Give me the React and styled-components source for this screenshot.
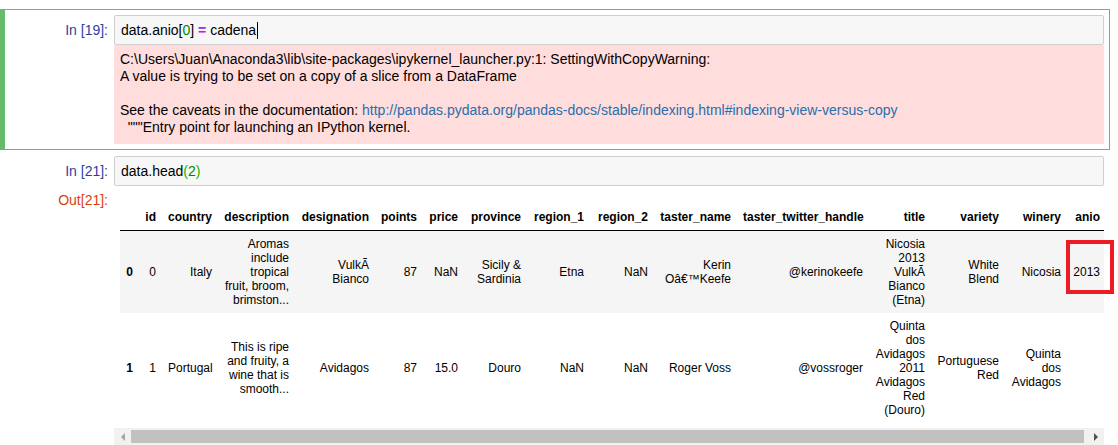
import styled, { createGlobalStyle } from 'styled-components';

const GlobalStyle = createGlobalStyle`
  html, body {
    margin: 0;
    padding: 0;
    background: #fff;
  }
  body {
    font-family: "Liberation Sans", Arial, sans-serif;
    color: #000;
    overflow: hidden;
  }
`;

const Notebook = styled.div`
  display: flex;
  flex-direction: column;
  padding: 9px 8px 0 0;
`;

const Cell = styled.div`
  display: flex;
  flex-direction: column;
  border: 1px solid ${(p) => (p.$selected ? '#66bb6a' : 'transparent')};
  border-left: 5px solid ${(p) => (p.$selected ? '#66bb6a' : 'transparent')};
  padding: 5px 5px 5px 0;
`;

const Row = styled.div`
  display: flex;
  align-items: flex-start;
  position: relative;
`;

const Prompt = styled.div`
  flex: 0 0 109px;
  box-sizing: border-box;
  padding: ${(p) => (p.$out ? '6px' : '7px')} 6px 0 0;
  text-align: right;
  font-size: 14px;
  line-height: 17px;
  color: ${(p) => (p.$out ? '#d84315' : '#303f9f')};
`;

const InputBox = styled.div`
  flex: 1;
  min-width: 0;
  box-sizing: border-box;
  height: 30px;
  padding: 6px 6px 5px;
  background: #f7f7f7;
  border: 1px solid #cfcfcf;
  border-radius: 2px;
  font-size: 14px;
  line-height: 17px;
  white-space: pre;
`;

const Num = styled.span`
  color: #080;
`;

const Operator = styled.span`
  color: #a2f;
  font-weight: bold;
`;

const Bracket = styled.span`
  color: #0b0;
`;

const Cursor = styled.span`
  display: inline-block;
  width: 1px;
  height: 17px;
  margin-left: 1px;
  background: #000;
  vertical-align: top;
`;

const Stderr = styled.pre`
  flex: 1;
  min-width: 0;
  margin: 0;
  box-sizing: border-box;
  padding: 6px 6px 8px;
  background: #fdd;
  font-family: "Liberation Sans", Arial, sans-serif;
  font-size: 14px;
  line-height: 17px;
  white-space: pre-wrap;
`;

const Link = styled.a`
  color: #296eaa;
  text-decoration: none;
`;

const OutputSubarea = styled.div`
  flex: 1;
  min-width: 0;
  display: flex;
  flex-direction: column;
`;

const Viewport = styled.div`
  overflow: hidden;
  padding: 6px 0 5px 6px;
`;

const Table = styled.table`
  margin-top: 12px;
  border-collapse: collapse;
  table-layout: fixed;
  width: ${(p) => p.$w}px;
  font-size: 12px;
  line-height: 14px;
`;

const Col = styled.col`
  width: ${(p) => p.$w}px;
`;

const Head = styled.thead`
  border-bottom: 1px solid #000;
`;

const HeadCell = styled.th`
  padding: 6px;
  text-align: right;
  vertical-align: middle;
  font-weight: bold;
  white-space: nowrap;
`;

const BodyRow = styled.tr`
  background: ${(p) => (p.$odd ? '#f5f5f5' : '#fff')};
`;

const IndexCell = styled.th`
  padding: 6px;
  text-align: right;
  vertical-align: middle;
  font-weight: bold;
`;

const DataCell = styled.td`
  padding: 6px;
  text-align: right;
  vertical-align: middle;
`;

const ScrollBar = styled.div`
  display: flex;
  align-items: center;
  height: 17px;
  background: #f1f1f1;
`;

const ScrollArrow = styled.div`
  flex: 0 0 17px;
  display: flex;
  justify-content: center;
  align-items: center;
  &::before {
    content: '';
    border-top: 4px solid transparent;
    border-bottom: 4px solid transparent;
    ${(p) =>
      p.$dir === 'left'
        ? 'border-right: 4px solid #a3a3a3;'
        : 'border-left: 4px solid #505050;'}
  }
`;

const ScrollThumb = styled.div`
  flex: 1;
  height: 13px;
  margin-right: 3px;
  background: #c1c1c1;
`;

const Highlight = styled.div`
  position: absolute;
  left: 1061px;
  top: 54px;
  width: 48px;
  height: 54px;
  box-sizing: border-box;
  border: 4px solid #ed1c24;
  pointer-events: none;
`;

const columns = [
  { label: '', w: 19 },
  { label: 'id', w: 23 },
  { label: 'country', w: 56 },
  { label: 'description', w: 77 },
  { label: 'designation', w: 80 },
  { label: 'points', w: 48 },
  { label: 'price', w: 41 },
  { label: 'province', w: 63 },
  { label: 'region_1', w: 63 },
  { label: 'region_2', w: 64 },
  { label: 'taster_name', w: 83 },
  { label: 'taster_twitter_handle', w: 132 },
  { label: 'title', w: 62 },
  { label: 'variety', w: 74 },
  { label: 'winery', w: 62 },
  { label: 'anio', w: 39 },
];

const rows = [
  [
    '0',
    '0',
    'Italy',
    'Aromas include tropical fruit, broom, brimston...',
    'VulkÃ Bianco',
    '87',
    'NaN',
    'Sicily & Sardinia',
    'Etna',
    'NaN',
    'Kerin Oâ€™Keefe',
    '@kerinokeefe',
    'Nicosia 2013 VulkÃ Bianco (Etna)',
    'White Blend',
    'Nicosia',
    '2013',
  ],
  [
    '1',
    '1',
    'Portugal',
    'This is ripe and fruity, a wine that is smooth...',
    'Avidagos',
    '87',
    '15.0',
    'Douro',
    'NaN',
    'NaN',
    'Roger Voss',
    '@vossroger',
    'Quinta dos Avidagos 2011 Avidagos Red (Douro)',
    'Portuguese Red',
    'Quinta dos Avidagos',
    '',
  ],
];

const tableWidth = columns.reduce((sum, c) => sum + c.w, 0);

function DataFrame() {
  return (
    <Table $w={tableWidth}>
      <colgroup>
        {columns.map((c, i) => (
          <Col key={i} $w={c.w} />
        ))}
      </colgroup>
      <Head>
        <tr>
          {columns.map((c, i) => (
            <HeadCell key={i}>{c.label}</HeadCell>
          ))}
        </tr>
      </Head>
      <tbody>
        {rows.map((row, r) => (
          <BodyRow key={r} $odd={r % 2 === 0}>
            <IndexCell>{row[0]}</IndexCell>
            {row.slice(1).map((v, i) => (
              <DataCell key={i}>{v}</DataCell>
            ))}
          </BodyRow>
        ))}
      </tbody>
    </Table>
  );
}

export default function App() {
  return (
    <>
      <GlobalStyle />
      <Notebook>
        <Cell $selected>
          <Row>
            <Prompt>In [19]:</Prompt>
            <InputBox>
              data.anio[<Num>0</Num>] <Operator>=</Operator> cadena
              <Cursor />
            </InputBox>
          </Row>
          <Row>
            <Prompt />
            <Stderr>
              {'C:\\Users\\Juan\\Anaconda3\\lib\\site-packages\\ipykernel_launcher.py:1: SettingWithCopyWarning:\n'}
              {'A value is trying to be set on a copy of a slice from a DataFrame\n\n'}
              {'See the caveats in the documentation: '}
              <Link href="#">
                http://pandas.pydata.org/pandas-docs/stable/indexing.html#indexing-view-versus-copy
              </Link>
              {'\n  """Entry point for launching an IPython kernel.'}
            </Stderr>
          </Row>
        </Cell>
        <Cell>
          <Row>
            <Prompt>In [21]:</Prompt>
            <InputBox>
              data.head<Bracket>(</Bracket>
              <Num>2</Num>
              <Bracket>)</Bracket>
            </InputBox>
          </Row>
          <Row>
            <Prompt $out>Out[21]:</Prompt>
            <OutputSubarea>
              <Viewport>
                <DataFrame />
              </Viewport>
              <ScrollBar>
                <ScrollArrow $dir="left" />
                <ScrollThumb />
                <ScrollArrow $dir="right" />
              </ScrollBar>
            </OutputSubarea>
            <Highlight />
          </Row>
        </Cell>
      </Notebook>
    </>
  );
}
